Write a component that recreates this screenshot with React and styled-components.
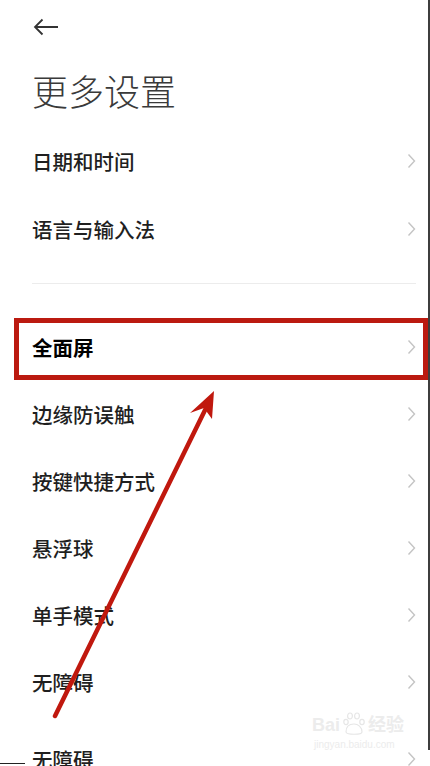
import styled, { createGlobalStyle, css } from 'styled-components';

const GlobalStyle = createGlobalStyle`
  html, body {
    margin: 0;
    padding: 0;
    background: #fff;
  }
  body {
    font-family: "Noto Sans CJK SC", "Noto Sans", sans-serif;
    overflow: hidden;
  }
`;

const Screen = styled.div`
  position: relative;
  width: 430px;
  height: 766px;
  overflow: hidden;
  background: #fff;
  padding: 0 14px 0 32px;
  box-sizing: border-box;

  &::after {
    content: '';
    position: absolute;
    top: 0;
    right: 0;
    width: 2px;
    height: 750px;
    background: #3d3d3d;
  }
`;

const Header = styled.div`
  height: 54px;
  display: flex;
  align-items: center;
  padding-left: 1px;
`;

const Title = styled.h1`
  margin: 0;
  height: 73px;
  line-height: 73px;
  font-size: 36px;
  font-weight: 300;
  color: #3a3a3a;
`;

const Group = styled.div(
  ({ $top }) => css`
    display: flex;
    flex-direction: column;
    padding-top: ${$top}px;
  `
);

const Divider = styled.div`
  height: 1px;
  background: #ececec;
  margin-top: 20px;
`;

const Row = styled.div(
  ({ $h, $bold, $gap = 0 }) => css`
    position: relative;
    display: flex;
    align-items: center;
    justify-content: space-between;
    height: ${$h}px;
    margin-top: ${$gap}px;
    font-size: 20.5px;
    font-weight: ${$bold ? 700 : 500};
    color: ${$bold ? '#000' : '#1f1f1f'};
  `
);

const Highlight = styled.div`
  position: absolute;
  left: -18px;
  right: -12px;
  top: 4px;
  bottom: 0;
  border: 5px solid #bb1a10;
  pointer-events: none;
`;

const Chevron = () => (
  <svg width="9" height="16" viewBox="0 0 9 16" fill="none">
    <path d="M1.5 1.5 L7.5 8 L1.5 14.5" stroke="#c4c4c4" strokeWidth="1.4" />
  </svg>
);

const BackArrow = () => (
  <svg width="26" height="18" viewBox="0 0 26 18" fill="none">
    <path d="M25 9 H2 M9.5 1.5 L2 9 L9.5 16.5" stroke="#333" strokeWidth="1.8" />
  </svg>
);

const Annotation = styled.svg`
  position: absolute;
  left: 0;
  top: 0;
  pointer-events: none;
`;

const BottomMark = styled.div`
  position: absolute;
  left: 0;
  bottom: 2px;
  width: 25px;
  height: 1.5px;
  background: #222;
`;

const Watermark = styled.div`
  position: absolute;
  left: 312px;
  top: 712px;
  display: flex;
  flex-direction: column;
  align-items: flex-start;
  color: #ececec;
  font-family: "Liberation Sans", Arial, "Noto Sans CJK SC", sans-serif;
  pointer-events: none;
`;

const Brand = styled.div`
  display: flex;
  align-items: flex-end;
  gap: 2px;
  font-size: 18px;
  font-weight: 700;
  line-height: 22px;
`;

const Domain = styled.div`
  font-size: 10px;
  margin-top: 3px;
  margin-left: 2px;
`;

const Paw = () => (
  <svg width="24" height="24" viewBox="0 0 24 24" fill="none" stroke="#e6e6e6" strokeWidth="1.2">
    <ellipse cx="8" cy="4" rx="2.4" ry="3" />
    <ellipse cx="15" cy="4" rx="2.4" ry="3" />
    <ellipse cx="4" cy="10" rx="2.2" ry="2.6" />
    <ellipse cx="20" cy="10" rx="2.2" ry="2.6" />
    <path d="M4 20 C4 14 8 12 12 12 C16 12 20 15 20 20 C20 23 4 23 4 20 Z" />
  </svg>
);

const topItems = ['日期和时间', '语言与输入法'];
const bottomItems = ['边缘防误触', '按键快捷方式', '悬浮球', '单手模式', '无障碍'];

export default function App() {
  return (
    <>
      <GlobalStyle />
      <Screen>
        <Header>
          <BackArrow />
        </Header>
        <Title>更多设置</Title>
        <Group $top={0}>
          {topItems.map((t) => (
            <Row key={t} $h={68}>
              {t}
              <Chevron />
            </Row>
          ))}
        </Group>
        <Divider />
        <Group $top={30}>
          <Row $h={66} $bold>
            全面屏
            <Chevron />
            <Highlight />
          </Row>
          {bottomItems.map((t, i) => (
            <Row key={i} $h={67}>
              {t}
              <Chevron />
            </Row>
          ))}
          <Row $h={67} $gap={10}>
            无障碍
            <Chevron />
          </Row>
        </Group>

        <Annotation width="430" height="766" viewBox="0 0 430 766">
          <line x1="55" y1="716" x2="208" y2="404" stroke="#c0180e" strokeWidth="4.5" strokeLinecap="round" />
          <polygon points="214,391 190,413 204,408 212,419" fill="#c0180e" />
        </Annotation>

        <Watermark>
          <Brand>
            <span>Bai</span>
            <Paw />
            <span>经验</span>
          </Brand>
          <Domain>jingyan.baidu.com</Domain>
        </Watermark>
        <BottomMark />
      </Screen>
    </>
  );
}
